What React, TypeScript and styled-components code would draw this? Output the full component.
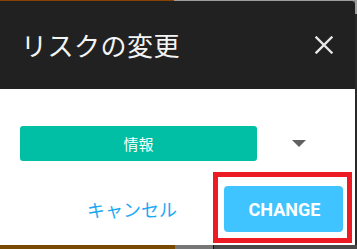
import React from "react";
import styled, { createGlobalStyle } from "styled-components";

const GlobalStyle = createGlobalStyle`
  html, body {
    margin: 0;
    padding: 0;
    background: #4a4a4a;
  }
  * {
    box-sizing: border-box;
  }
`;

// dimmed page behind the dialog, only its edges are visible
const Backdrop = styled.div`
  width: 357px;
  height: 249px;
  overflow: hidden;
  background:
    linear-gradient(to right, #8a4200 0 174px, #9c9c9c 174px) top / 100% 1px no-repeat,
    linear-gradient(to right, #774800 0 175px, #767676 175px 213px, #111 213px 214px, #4a4a4a 214px) bottom / 100% 4px no-repeat,
    linear-gradient(to bottom, #9c9c9c 0 14px, #2a2a2a 14px) right / 2px 100% no-repeat,
    #5e5e5e;
`;

const Dialog = styled.div`
  margin-top: 1px;
  width: 355px;
  height: 244px;
  background: #ffffff;
  border-top-right-radius: 3px;
  overflow: hidden;
  display: flex;
  flex-direction: column;
`;

const DialogHeader = styled.div`
  height: 88px;
  background: #212121;
  display: flex;
  align-items: center;
  justify-content: space-between;
  padding: 0 20px 0 21px;
`;

const DialogTitle = styled.h2`
  margin: 0;
  font-family: "Noto Sans CJK JP", "Noto Sans", sans-serif;
  font-weight: 400;
  font-size: 26px;
  line-height: 1;
  letter-spacing: 0.5px;
  color: #f4f4f4;
`;

const CloseButton = styled.button`
  border: 0;
  background: transparent;
  padding: 0;
  width: 22px;
  height: 22px;
  display: flex;
  align-items: center;
  justify-content: center;
  color: #e6e6e6;
  cursor: pointer;
`;

const DialogBody = styled.div`
  padding: 37px 12px 0 20px;
  display: flex;
  flex-direction: column;
`;

const SelectRow = styled.div`
  display: flex;
  align-items: center;
  height: 35px;
`;

const LevelChip = styled.div<{ $color: string }>`
  width: 237px;
  height: 35px;
  border-radius: 3px;
  background: ${(props) => props.$color};
  color: #ffffff;
  display: flex;
  align-items: center;
  justify-content: center;
  font-family: "Noto Sans CJK JP", "Noto Sans", sans-serif;
  font-size: 15px;
`;

const DropArrow = styled.span`
  margin-left: 35px;
  width: 0;
  height: 0;
  border-left: 7px solid transparent;
  border-right: 7px solid transparent;
  border-top: 7px solid #616161;
`;

const Actions = styled.div`
  margin-top: 25px;
  display: flex;
  align-items: center;
  justify-content: flex-end;
`;

const TextButton = styled.button`
  border: 0;
  background: transparent;
  padding: 0;
  margin-right: 47px;
  font-family: "Noto Sans CJK JP", "Noto Sans", sans-serif;
  font-size: 18px;
  color: #1ea9f2;
  cursor: pointer;
`;

// red annotation frame drawn over the primary button
const Highlight = styled.div`
  position: relative;

  &::after {
    content: "";
    position: absolute;
    left: -11px;
    top: -14px;
    right: -9px;
    bottom: -11px;
    border: 5px solid #ed1c24;
    pointer-events: none;
  }
`;

const PrimaryButton = styled.button`
  width: 119px;
  height: 46px;
  border: 0;
  border-radius: 4px;
  background: #40c4ff;
  color: #ffffff;
  font-family: Roboto, "Liberation Sans", sans-serif;
  font-weight: 700;
  font-size: 18px;
  padding: 0 0 0 2px;
  cursor: pointer;
`;

function CloseIcon() {
  return (
    <svg width="18" height="18" viewBox="0 0 18 18" fill="none">
      <path
        d="M1.5 1.5 L16.5 16.5 M16.5 1.5 L1.5 16.5"
        stroke="currentColor"
        strokeWidth="2.4"
        strokeLinecap="square"
      />
    </svg>
  );
}

export default function App() {
  return (
    <>
      <GlobalStyle />
      <Backdrop>
        <Dialog>
          <DialogHeader>
            <DialogTitle>リスクの変更</DialogTitle>
            <CloseButton aria-label="close">
              <CloseIcon />
            </CloseButton>
          </DialogHeader>
          <DialogBody>
            <SelectRow>
              <LevelChip $color="#00bfa5">情報</LevelChip>
              <DropArrow />
            </SelectRow>
            <Actions>
              <TextButton>キャンセル</TextButton>
              <Highlight>
                <PrimaryButton>CHANGE</PrimaryButton>
              </Highlight>
            </Actions>
          </DialogBody>
        </Dialog>
      </Backdrop>
    </>
  );
}
